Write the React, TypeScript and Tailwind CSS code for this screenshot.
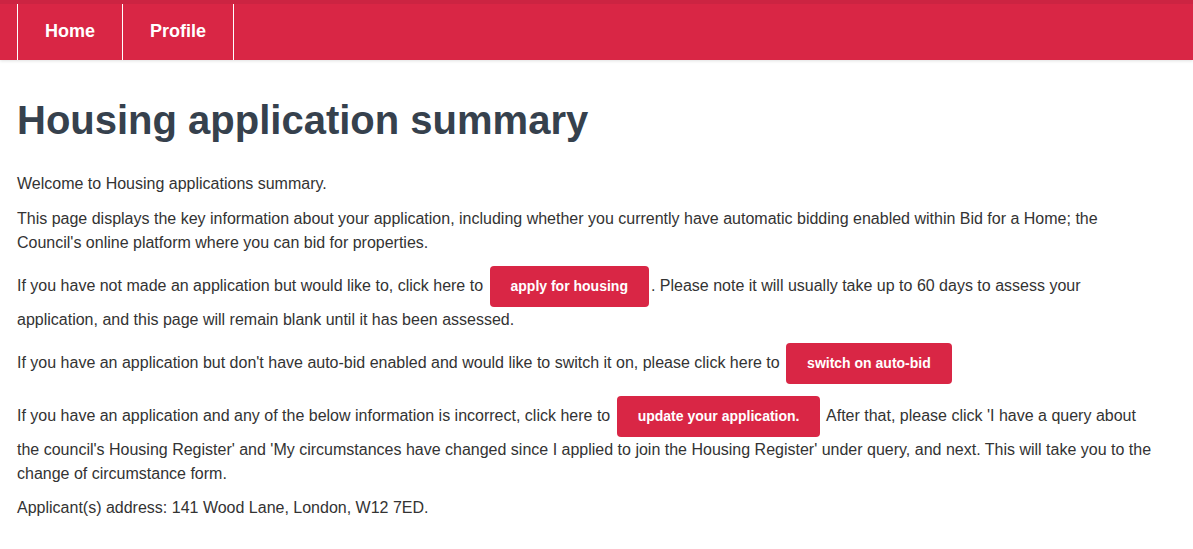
import React from "react";

const navItems = ["Home", "Profile"];

function ActionButton({ label }: { label: string }) {
  return (
    <a
      href="#"
      className="mx-[2px] my-[1px] inline-block rounded-[4px] bg-[#d92645] px-[21px] py-[11px] align-middle text-sm font-bold leading-[19px] text-white"
    >
      {label}
    </a>
  );
}

export default function App() {
  return (
    <div className="min-h-screen bg-white font-['Liberation_Sans',Arial,sans-serif] text-[#333]">
      <nav className="border-t-[4px] border-[#cc2442] bg-[#d92645] px-[17px] shadow-[0_1px_3px_rgba(0,0,0,0.12)]">
        <ul className="flex h-[56px] border-l border-white">
          {navItems.map((item) => (
            <li key={item} className="flex">
              <a
                href="#"
                className="flex items-center border-r border-white px-[27px] pb-[3px] text-lg font-bold text-white"
              >
                {item}
              </a>
            </li>
          ))}
        </ul>
      </nav>
      <main className="pl-[17px] pr-[37px]">
        <h1 className="mt-[38px] mb-[30px] text-[40px] font-bold leading-[44px] text-[#36414d]">
          Housing application summary
        </h1>
        <div className="text-base leading-6">
          <p className="mb-[11px]">Welcome to Housing applications summary.</p>
          <p className="mb-[10px]">
            This page displays the key information about your application,
            including whether you currently have automatic bidding enabled
            within Bid for a Home; the Council's online platform where you can
            bid for properties.
          </p>
          <p className="mb-[10px]">
            If you have not made an application but would like to, click here
            to <ActionButton label="apply for housing" />. Please note it will
            usually take up to 60 days to assess your application, and this page
            will remain blank until it has been assessed.
          </p>
          <p className="mb-[10px]">
            If you have an application but don't have auto-bid enabled and would
            like to switch it on, please click here to{" "}
            <ActionButton label="switch on auto-bid" />
          </p>
          <p className="mb-[10px]">
            If you have an application and any of the below information is
            incorrect, click here to{" "}
            <ActionButton label="update your application." /> After that, please
            click 'I have a query about the council's Housing Register' and 'My
            circumstances have changed since I applied to join the Housing
            Register' under query, and next. This will take you to the change of
            circumstance form.
          </p>
          <p className="mb-[10px]">
            Applicant(s) address: 141 Wood Lane, London, W12 7ED.
          </p>
        </div>
      </main>
    </div>
  );
}
